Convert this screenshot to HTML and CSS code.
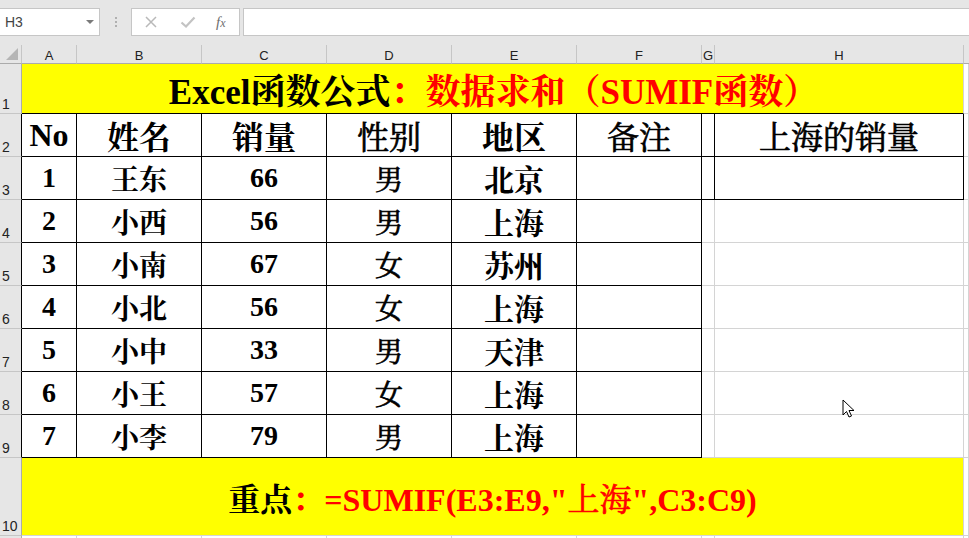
FILE: index.html
```html
<!DOCTYPE html>
<html lang="zh-CN">
<head>
<meta charset="utf-8">
<title>SUMIF</title>
<link rel="stylesheet" href="styles.css">
</head>
<body>
<div class="toolbar">
  <div class="namebox"><span class="ref">H3</span><span class="drop"></span></div>
  <div class="dots"><i></i><i></i><i></i></div>
  <div class="fxbox">
    <svg class="ico" width="14" height="14" viewBox="0 0 14 14"><path d="M2 2 L12 12 M12 2 L2 12" stroke="#b9b9b9" stroke-width="1.5" fill="none"/></svg>
    <svg class="ico" width="16" height="14" viewBox="0 0 16 14"><path d="M1.5 7.5 L6 11.5 L14.5 2.5" stroke="#c3c3c3" stroke-width="2.2" fill="none"/></svg>
    <span class="fx">f<span class="fxx">x</span></span>
  </div>
  <div class="formula"></div>
</div>
<div class="sheet">
  <div class="corner"><span class="tri"></span></div>
  <div class="ch">A</div><div class="ch">B</div><div class="ch">C</div><div class="ch">D</div><div class="ch">E</div><div class="ch">F</div><div class="ch">G</div><div class="ch">H</div><div class="ch last"></div>

  <div class="rh">1</div>
  <div class="title"><span class="blk">Excel函数公式</span><span class="red">：数据求和（SUMIF函数）</span></div>
  <div class="c"></div>

  <div class="rh k">2</div>
  <div class="b hd">No</div><div class="b hd">姓名</div><div class="b hd">销量</div><div class="b hd thin">性别</div><div class="b hd">地区</div><div class="b hd thin">备注</div><div class="b"></div><div class="b hd thin">上海的销量</div><div class="c"></div>

  <div class="rh k">3</div>
  <div class="b d">1</div><div class="b d">王东</div><div class="b d">66</div><div class="b d thin">男</div><div class="b d big">北京</div><div class="b"></div><div class="b"></div><div class="b"></div><div class="c"></div>

  <div class="rh k">4</div>
  <div class="b d">2</div><div class="b d">小西</div><div class="b d">56</div><div class="b d thin">男</div><div class="b d big">上海</div><div class="b"></div><div class="c"></div><div class="c"></div><div class="c"></div>

  <div class="rh k">5</div>
  <div class="b d">3</div><div class="b d">小南</div><div class="b d">67</div><div class="b d thin">女</div><div class="b d big">苏州</div><div class="b"></div><div class="c"></div><div class="c"></div><div class="c"></div>

  <div class="rh k">6</div>
  <div class="b d">4</div><div class="b d">小北</div><div class="b d">56</div><div class="b d thin">女</div><div class="b d big">上海</div><div class="b"></div><div class="c"></div><div class="c"></div><div class="c"></div>

  <div class="rh k">7</div>
  <div class="b d">5</div><div class="b d">小中</div><div class="b d">33</div><div class="b d thin">男</div><div class="b d big">天津</div><div class="b"></div><div class="c"></div><div class="c"></div><div class="c"></div>

  <div class="rh k">8</div>
  <div class="b d">6</div><div class="b d">小王</div><div class="b d">57</div><div class="b d thin">女</div><div class="b d big">上海</div><div class="b"></div><div class="c"></div><div class="c"></div><div class="c"></div>

  <div class="rh k">9</div>
  <div class="b d">7</div><div class="b d">小李</div><div class="b d">79</div><div class="b d thin">男</div><div class="b d big">上海</div><div class="b"></div><div class="c"></div><div class="c"></div><div class="c"></div>

  <div class="rh">10</div>
  <div class="foot"><span class="blk">重点</span><span class="red">：=SUMIF(E3:E9,"<span class="thin">上海</span>",C3:C9)</span></div>
  <div class="c"></div>

  <div class="rh"></div>
  <div class="c"></div><div class="c"></div><div class="c"></div><div class="c"></div><div class="c"></div><div class="c"></div><div class="c"></div><div class="c"></div><div class="c"></div>
</div>
<svg class="cursor" width="14" height="20" viewBox="0 0 14 20"><path d="M1 1 L1 16 L4.5 12.5 L7 18 L9.5 17 L7 11.5 L12 11.5 Z" fill="#fff" stroke="#000" stroke-width="1" stroke-linejoin="miter"/></svg>
</body>
</html>
```

FILE: styles.css
```css
html, body {
  margin: 0;
  padding: 0;
  width: 969px;
  height: 538px;
  overflow: hidden;
  background: #fff;
}
body {
  position: relative;
  font-family: "Liberation Sans", Arial, sans-serif;
}
.toolbar {
  height: 45px;
  background: #e6e6e6;
  display: flex;
  align-items: flex-start;
  padding-top: 8px;
  box-sizing: border-box;
}
.namebox {
  width: 100px;
  height: 28px;
  box-sizing: border-box;
  background: #fff;
  border: 1px solid #c6c6c6;
  border-left: none;
  display: flex;
  align-items: center;
  justify-content: space-between;
  padding: 0 5px 0 5px;
}
.ref {
  font-size: 14px;
  color: #444;
}
.drop {
  width: 0;
  height: 0;
  border-left: 4px solid transparent;
  border-right: 4px solid transparent;
  border-top: 4px solid #7a7a7a;
}
.dots {
  width: 31px;
  height: 28px;
  display: flex;
  flex-direction: column;
  align-items: center;
  justify-content: center;
  gap: 2px;
}
.dots i {
  display: block;
  width: 2px;
  height: 2px;
  background: #b0b0b0;
}
.fxbox {
  width: 109px;
  height: 28px;
  box-sizing: border-box;
  background: #fff;
  border: 1px solid #c6c6c6;
  display: flex;
  align-items: center;
  padding-left: 12px;
  gap: 22px;
}
.ico {
  display: block;
}
.fx {
  font-family: "Liberation Serif", serif;
  font-style: italic;
  font-size: 15px;
  color: #6e6e6e;
  margin-left: -2px;
}
.fxx {
  font-size: 12px;
}
.formula {
  flex: 1;
  height: 28px;
  margin-left: 3px;
  margin-right: -1px;
  box-sizing: border-box;
  background: #fff;
  border: 1px solid #c6c6c6;
}
.sheet {
  display: grid;
  grid-template-columns: 22px 55px 125px 125px 125px 125px 125px 13px 249px 1fr;
  grid-template-rows: 19px 50px repeat(8, 43px) 78px 10px;
}
.sheet > div {
  box-sizing: border-box;
  min-width: 0;
}
.corner {
  background: #e6e6e6;
  border-right: 1px solid #c6c6c6;
  border-bottom: 1px solid #ababab;
  position: relative;
}
.tri {
  position: absolute;
  right: 3px;
  bottom: 3px;
  width: 0;
  height: 0;
  border-left: 12px solid transparent;
  border-bottom: 12px solid #b5b5b5;
}
.ch {
  background: #e6e6e6;
  border-right: 1px solid #c6c6c6;
  border-bottom: 1px solid #ababab;
  font-size: 13px;
  color: #222;
  text-align: center;
  line-height: 16px;
  padding-top: 3px;
}
.ch.last {
  border-right: none;
}
.rh {
  background: #e6e6e6;
  border-right: 1px solid #ababab;
  border-bottom: 1px solid #c6c6c6;
  font-size: 14px;
  color: #222;
  display: flex;
  align-items: flex-end;
  padding: 0 0 1px 2px;
  line-height: 16px;
}
.rh.k {
  border-right-color: #000;
}
.c {
  border-right: 1px solid #d4d4d4;
  border-bottom: 1px solid #d4d4d4;
}
.b {
  border-right: 1px solid #000;
  border-bottom: 1px solid #000;
}
.title, .foot {
  grid-column: 2 / 10;
  background: #ff0;
  display: flex;
  align-items: center;
  justify-content: center;
  font-family: "Liberation Serif", "Noto Serif CJK SC", "Noto Sans CJK SC", serif;
  font-weight: bold;
  white-space: nowrap;
  border-right: 1px solid #d4d4d4;
}
.title {
  font-size: 35px;
  border-bottom: 1px solid #000;
  padding-left: 2px;
}
.foot {
  font-size: 32px;
  border-bottom: 1px solid #d4d4d4;
}
.blk {
  color: #000;
}
.red {
  color: #f00;
}
.hd, .d {
  display: flex;
  align-items: center;
  justify-content: center;
  font-family: "Liberation Serif", "Noto Serif CJK SC", "Noto Sans CJK SC", serif;
  font-weight: bold;
  color: #000;
  white-space: nowrap;
}
.hd {
  font-size: 32px;
}
.d {
  font-size: 28px;
}
.d.big {
  font-size: 30px;
}
.thin {
  font-weight: normal;
  -webkit-text-stroke: 0.7px currentColor;
}
.cursor {
  position: absolute;
  left: 842px;
  top: 399px;
}
```
